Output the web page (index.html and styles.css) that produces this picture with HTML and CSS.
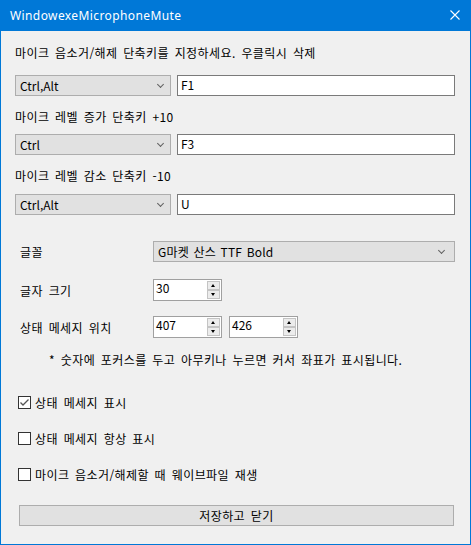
FILE: index.html
```html
<!DOCTYPE html>
<html lang="ko">
<head>
  <meta charset="UTF-8">
  <title>WindowexeMicrophoneMute</title>
  <link rel="stylesheet" href="styles.css">
</head>
<body>

  <div class="window">
    <div class="titlebar">
      <span class="title">WindowexeMicrophoneMute</span>
      <span class="close-btn">
        <svg width="10" height="10" viewBox="0 0 10 10">
          <path d="M0.5 0.5 L9.5 9.5 M9.5 0.5 L0.5 9.5" stroke="#fff" stroke-width="1.1" fill="none"/>
        </svg>
      </span>
    </div>

    <div class="content">
      <div class="field-label label-1">마이크 음소거/해제 단축키를 지정하세요. 우클릭시 삭제</div>
      <div class="hotkey-row row-1">
        <div class="combo">Ctrl,Alt<span class="chevron"></span></div>
        <div class="textbox">F1</div>
      </div>

      <div class="field-label label-2">마이크 레벨 증가 단축키 +10</div>
      <div class="hotkey-row row-2">
        <div class="combo">Ctrl<span class="chevron"></span></div>
        <div class="textbox">F3</div>
      </div>

      <div class="field-label label-3">마이크 레벨 감소 단축키 -10</div>
      <div class="hotkey-row row-3">
        <div class="combo">Ctrl,Alt<span class="chevron"></span></div>
        <div class="textbox">U</div>
      </div>

      <div class="option-row font-row">
        <span class="option-label">글꼴</span>
        <div class="combo font-combo">G마켓 산스 TTF Bold<span class="chevron"></span></div>
      </div>

      <div class="option-row size-row">
        <span class="option-label">글자 크기</span>
        <div class="spinner">30<span class="spin-btns"><span class="spin-up"></span><span class="spin-down"></span></span></div>
      </div>

      <div class="option-row pos-row">
        <span class="option-label">상태 메세지 위치</span>
        <div class="spinner">407<span class="spin-btns"><span class="spin-up"></span><span class="spin-down"></span></span></div>
        <div class="spinner">426<span class="spin-btns"><span class="spin-up"></span><span class="spin-down"></span></span></div>
      </div>

      <div class="note">* 숫자에 포커스를 두고 아무키나 누르면 커서 좌표가 표시됩니다.</div>

      <label class="check-row check-1">
        <span class="checkbox checked">
          <svg width="11" height="11" viewBox="0 0 11 11">
            <path d="M1.5 5.5 L4 8 L9.5 2.5" stroke="#555" stroke-width="1.3" fill="none"/>
          </svg>
        </span>
        상태 메세지 표시
      </label>
      <label class="check-row check-2">
        <span class="checkbox"></span>
        상태 메세지 항상 표시
      </label>
      <label class="check-row check-3">
        <span class="checkbox"></span>
        마이크 음소거/해제할 때 웨이브파일 재생
      </label>

      <button class="save-btn">저장하고 닫기</button>
    </div>
  </div>

</body>
</html>
```

FILE: styles.css
```css
body {
  margin: 0;
  font-family: "Noto Sans CJK KR", sans-serif;
  font-size: 12px;
  color: #000;
  background-color: #f0f0f0;
}

.window {
  width: 471px;
  height: 545px;
  box-sizing: border-box;
  border: 1px solid #0078d7;
  border-top: none;
  background-color: #f0f0f0;
  display: flex;
  flex-direction: column;
}

.titlebar {
  height: 31px;
  margin: 0 -1px;
  background-color: #0078d7;
  color: #fff;
  display: flex;
  align-items: center;
  justify-content: space-between;
  padding: 0 11px 0 10px;
}

.title {
  font-family: "Noto Sans", sans-serif;
  font-size: 12px;
  letter-spacing: 0.4px;
}

.close-btn {
  display: flex;
  margin-top: -1px;
}

.content {
  display: flex;
  flex-direction: column;
  padding-left: 14px;
  letter-spacing: 0.4px;
  word-spacing: 2px;
}

.field-label {
  height: 16px;
  line-height: 16px;
  white-space: nowrap;
}

.label-1 { margin-top: 14px; }
.label-2 { margin-top: 13px; }
.label-3 { margin-top: 13px; }

.hotkey-row {
  display: flex;
  gap: 6px;
}

.row-1 { margin-top: 14px; }
.row-2 { margin-top: 9px; }
.row-3 { margin-top: 10px; }

.combo {
  position: relative;
  width: 156px;
  height: 21px;
  box-sizing: border-box;
  border: 1px solid #adadad;
  background-color: #e1e1e1;
  line-height: 19px;
  padding-left: 4px;
  letter-spacing: 0;
  word-spacing: 0;
}

.chevron {
  position: absolute;
  right: 7px;
  top: 6px;
  width: 4px;
  height: 4px;
  border-right: 1px solid #606060;
  border-bottom: 1px solid #606060;
  transform: rotate(45deg);
}

.textbox {
  width: 278px;
  height: 21px;
  box-sizing: border-box;
  border: 1px solid #7a7a7a;
  background-color: #fff;
  line-height: 17px;
  padding-left: 3px;
  letter-spacing: 0;
}

.option-row {
  display: flex;
  align-items: center;
  padding-left: 5px;
}

.option-label {
  width: 133px;
  white-space: nowrap;
}

.font-row { margin-top: 26px; }
.size-row { margin-top: 17px; }
.pos-row { margin-top: 15px; gap: 7px; }
.pos-row .option-label { width: 126px; }

.font-combo {
  width: 302px;
  padding-left: 4px;
  letter-spacing: 0.2px;
  word-spacing: 1px;
}

.font-combo .chevron {
  right: 10px;
}

.spinner {
  position: relative;
  width: 69px;
  height: 22px;
  box-sizing: border-box;
  border: 1px solid #a0a0a0;
  background-color: #fff;
  line-height: 16px;
  padding-left: 2px;
  letter-spacing: 0;
}

.spin-btns {
  position: absolute;
  right: 1px;
  top: 1px;
  width: 13px;
  height: 18px;
  display: flex;
  flex-direction: column;
}

.spin-up,
.spin-down {
  position: relative;
  flex: 1;
  box-sizing: border-box;
  border: 1px solid #c4c4c4;
  background-color: #ececec;
}

.spin-up::after,
.spin-down::after {
  content: "";
  position: absolute;
  left: 3px;
  top: 2px;
  border-left: 2.5px solid transparent;
  border-right: 2.5px solid transparent;
}

.spin-up::after {
  border-bottom: 3px solid #000;
}

.spin-down::after {
  border-top: 3px solid #000;
}

.note {
  margin-top: 14px;
  padding-left: 34px;
  height: 16px;
  line-height: 16px;
  white-space: nowrap;
}

.check-row {
  display: flex;
  align-items: center;
  gap: 4px;
  height: 17px;
  padding-left: 3px;
  white-space: nowrap;
}

.check-1 { margin-top: 26px; }
.check-2 { margin-top: 19px; }
.check-3 { margin-top: 19px; }

.checkbox {
  width: 13px;
  height: 13px;
  box-sizing: border-box;
  border: 1px solid #333;
  background-color: #fff;
  display: flex;
  align-items: center;
  justify-content: center;
}

.save-btn {
  margin-top: 22px;
  margin-left: 4px;
  width: 435px;
  height: 21px;
  box-sizing: border-box;
  border: 1px solid #adadad;
  background-color: #e1e1e1;
  font-family: inherit;
  font-size: 12px;
  letter-spacing: 0.4px;
  word-spacing: 2px;
  padding: 0;
  line-height: 17px;
  color: #000;
}
```
